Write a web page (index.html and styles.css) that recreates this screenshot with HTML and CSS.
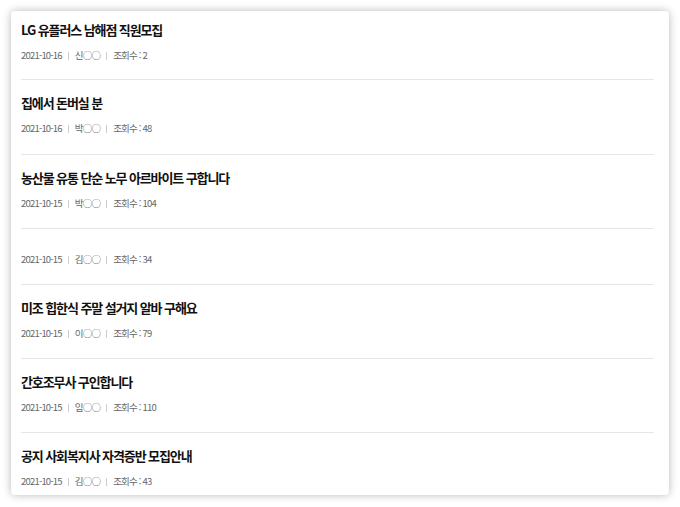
FILE: index.html
```html
<!DOCTYPE html>
<html lang="ko">
<head>
    <meta charset="UTF-8">
    <meta name="viewport" content="width=device-width, initial-scale=1.0">
    <title>구인 게시판</title>
    <link rel="stylesheet" href="styles.css">
</head>
<body>
    <div class="board">
        <div class="post">
            <h3 class="post-title">LG 유플러스 남해점 직원모집</h3>
            <div class="post-meta"><span>2021-10-16</span><span>신○○</span><span>조회수 : 2</span></div>
        </div>
        <div class="post">
            <h3 class="post-title">집에서 돈버실 분</h3>
            <div class="post-meta"><span>2021-10-16</span><span>박○○</span><span>조회수 : 48</span></div>
        </div>
        <div class="post">
            <h3 class="post-title">농산물 유통 단순 노무 아르바이트 구합니다</h3>
            <div class="post-meta"><span>2021-10-15</span><span>박○○</span><span>조회수 : 104</span></div>
        </div>
        <div class="post">
            <h3 class="post-title"></h3>
            <div class="post-meta"><span>2021-10-15</span><span>김○○</span><span>조회수 : 34</span></div>
        </div>
        <div class="post">
            <h3 class="post-title">미조 힙한식 주말 설거지 알바 구해요</h3>
            <div class="post-meta"><span>2021-10-15</span><span>이○○</span><span>조회수 : 79</span></div>
        </div>
        <div class="post">
            <h3 class="post-title">간호조무사 구인합니다</h3>
            <div class="post-meta"><span>2021-10-15</span><span>임○○</span><span>조회수 : 110</span></div>
        </div>
        <div class="post">
            <h3 class="post-title">공지 사회복지사 자격증반 모집안내</h3>
            <div class="post-meta"><span>2021-10-15</span><span>김○○</span><span>조회수 : 43</span></div>
        </div>
    </div>
</body>
</html>
```

FILE: styles.css
```css
body {
    margin: 0;
    padding: 11px;
    background: #fff;
    font-family: "Noto Sans CJK KR", "Noto Sans", sans-serif;
    color: #111;
}

.board {
    height: 484px;
    box-sizing: border-box;
    padding: 0 15px 0 10px;
    background: #fff;
    border-radius: 4px;
    box-shadow: 0 0 9px rgba(0, 0, 0, 0.28);
    overflow: hidden;
}

.post {
    padding: 14px 0 18px;
    border-bottom: 1px solid #e6e6e6;
}

.post:first-child {
    padding-top: 10px;
    padding-bottom: 17px;
}

.post:nth-child(2) {
    padding-bottom: 19px;
}

.post:last-child {
    padding-bottom: 7px;
    border-bottom: none;
}

.post-title {
    margin: 0 0 9px;
    font-size: 13px;
    line-height: 18px;
    font-weight: 700;
    letter-spacing: -1.1px;
    color: #111;
}

.post-meta {
    display: flex;
    align-items: center;
    font-size: 9.5px;
    line-height: 14px;
    letter-spacing: -0.8px;
    color: #666;
}

.post-meta span + span::before {
    content: "";
    display: inline-block;
    width: 1px;
    height: 8px;
    margin: 0 6px;
    background: #ccc;
    vertical-align: -1px;
}
```
